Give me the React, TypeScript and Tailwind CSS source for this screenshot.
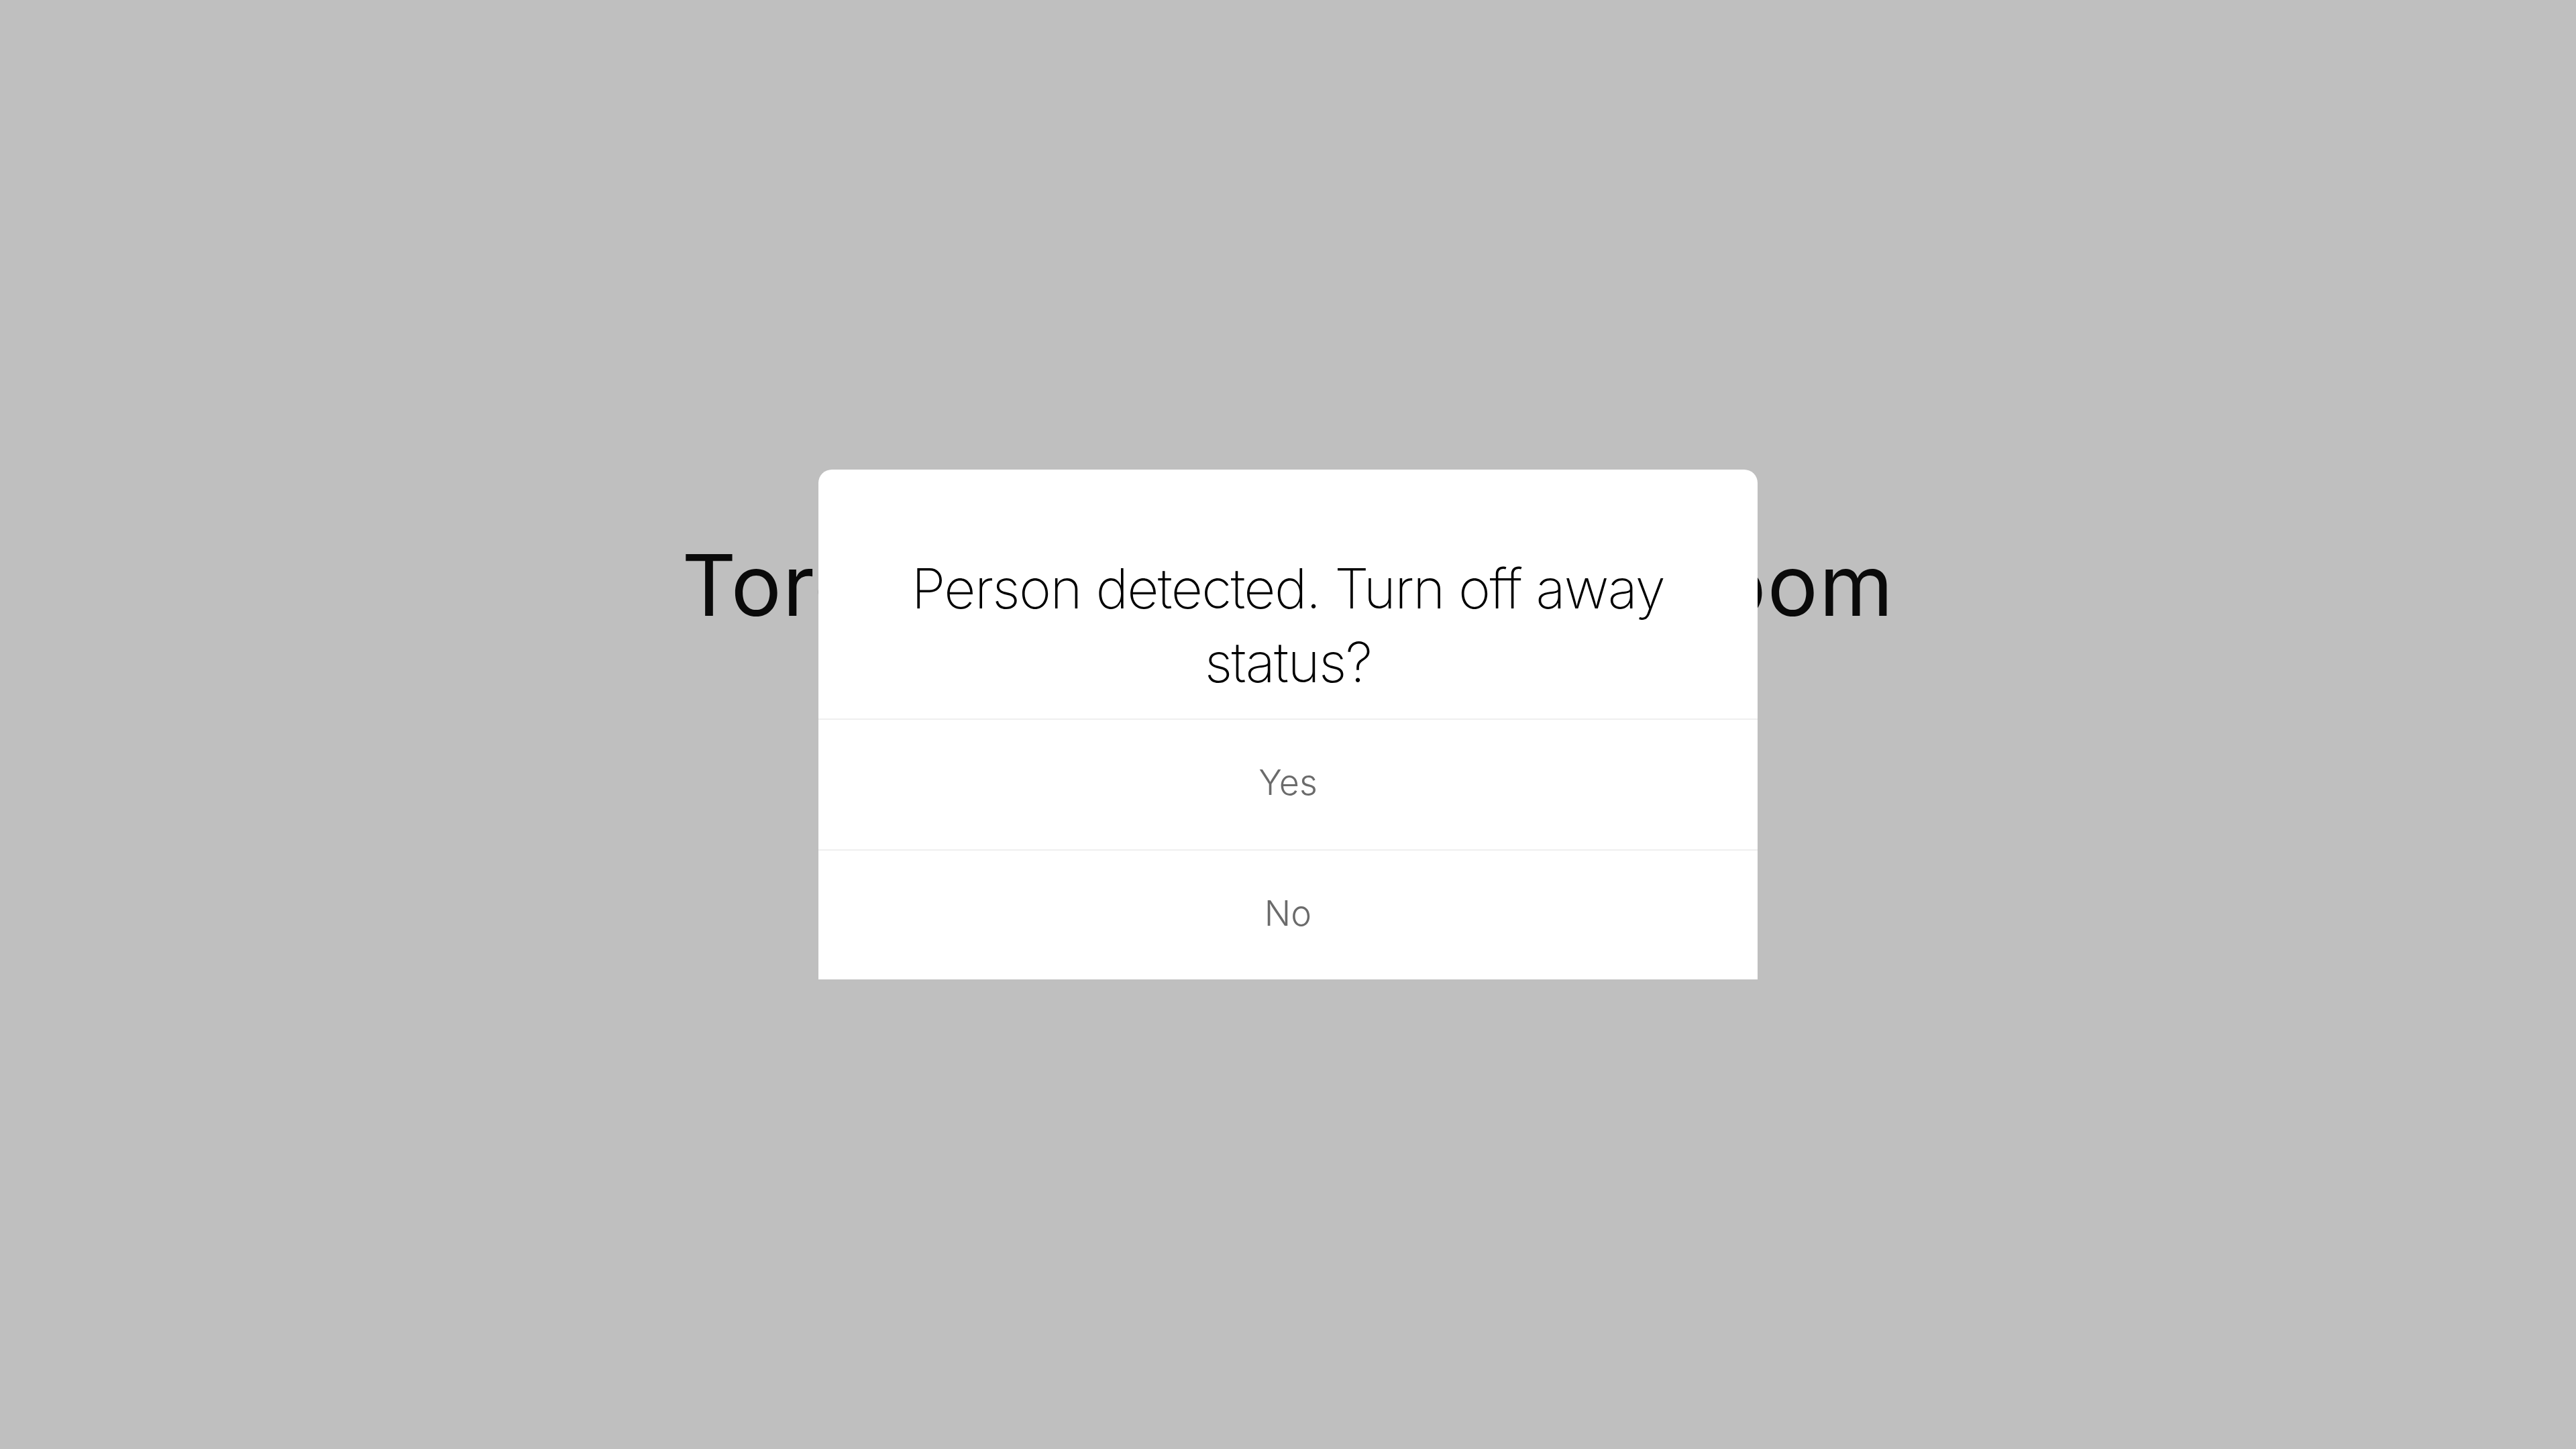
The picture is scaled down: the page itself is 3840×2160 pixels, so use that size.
import React from "react";

export default function App() {
  return (
    <div className="relative w-[3840px] h-[2160px] bg-[#bfbfbf] overflow-hidden" style={{ fontFamily: "Inter, 'Noto Sans', sans-serif" }}>
      <div className="flex flex-col items-center pt-[796px]">
        <h1 className="text-[126px] leading-[152px] font-normal text-[#0a0a0a] whitespace-nowrap tracking-[0.013em]">
          Toronto Executive Boardroom
        </h1>
      </div>

      <div className="absolute inset-0 flex items-center justify-center">
        <div className="w-[1400px] h-[760px] bg-white rounded-t-[20px] flex flex-col">
          <div className="h-[371px] flex flex-col items-center pt-[123px] px-[120px]">
            <p className="text-[82px] leading-[110px] font-[250] text-black text-center tracking-[-0.02em]">
              Person detected. Turn off away status?
            </p>
          </div>
          <div className="h-[2px] bg-[#efefef]" />
          <button className="h-[193px] pb-[5px] flex items-center justify-center text-[52px] font-light text-[#6b6b6b]">
            Yes
          </button>
          <div className="h-[2px] bg-[#efefef]" />
          <button className="h-[192px] pb-[5px] flex items-center justify-center text-[52px] font-light text-[#6b6b6b]">
            No
          </button>
        </div>
      </div>
    </div>
  );
}
